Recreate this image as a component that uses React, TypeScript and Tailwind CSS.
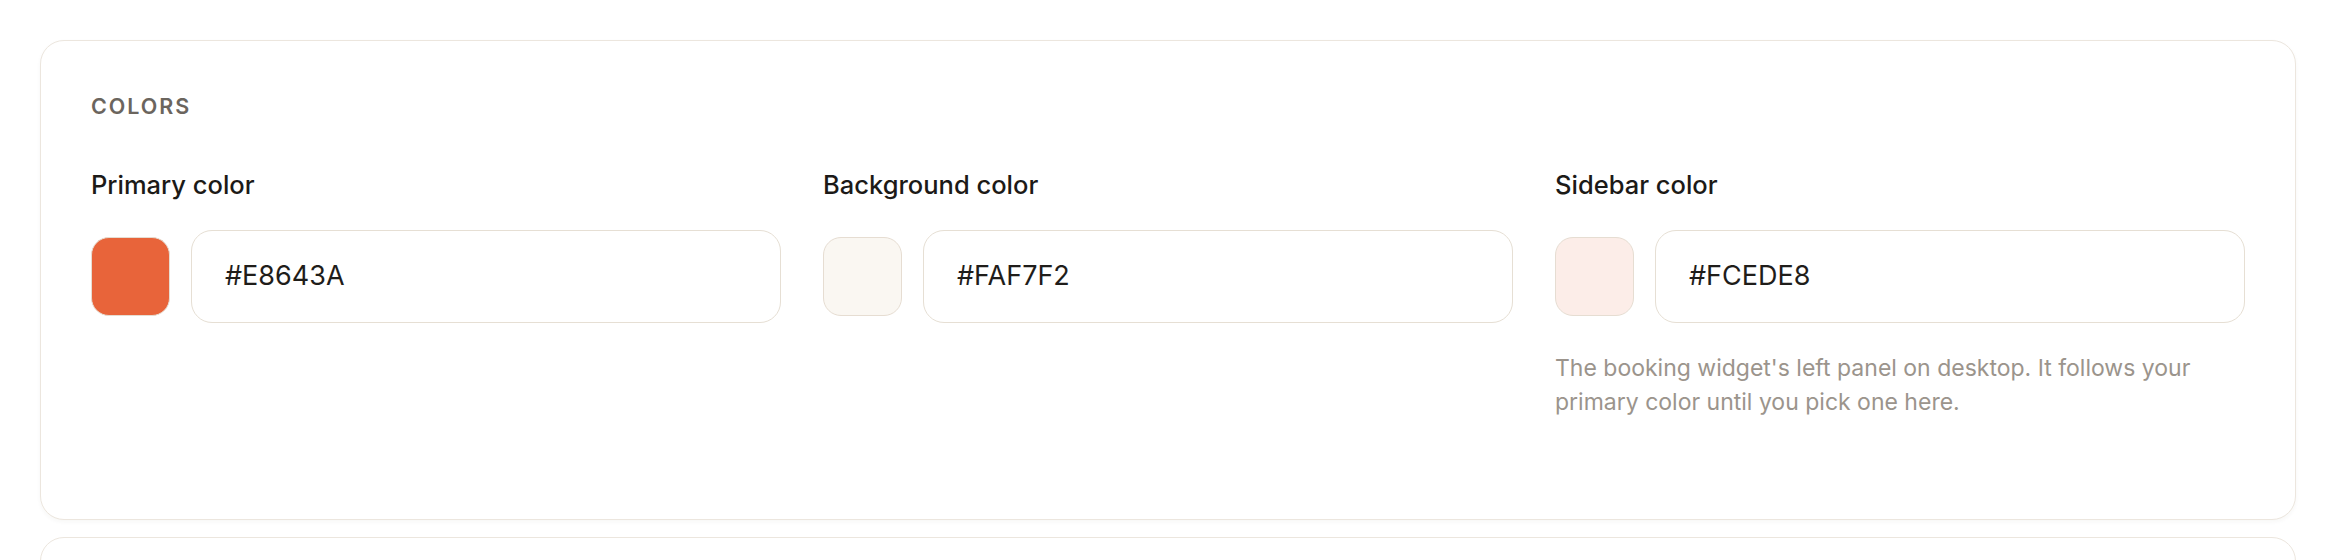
import React from "react";

interface ColorField {
  label: string;
  value: string;
  hint?: string;
}

const fields: ColorField[] = [
  { label: "Primary color", value: "#E8643A" },
  { label: "Background color", value: "#FAF7F2" },
  {
    label: "Sidebar color",
    value: "#FCEDE8",
    hint: "The booking widget's left panel on desktop. It follows your primary color until you pick one here.",
  },
];

function ColorInput({ field }: { field: ColorField }) {
  return (
    <div className="flex flex-col">
      <label className="text-[25.5px] leading-[36px] font-medium text-[#1c1a17]">{field.label}</label>
      <div className="mt-[27px] flex items-center gap-[21px]">
        <div
          className="w-[79px] h-[79px] shrink-0 rounded-[18px] border-[1.5px] border-[#e6ddd2]"
          style={{ backgroundColor: field.value }}
        />
        <div className="flex-1 h-[93px] flex items-center rounded-[21px] border-[1.5px] border-[#e6dfd4] bg-white px-[33px]">
          <span className="text-[27px] text-[#1f1d1a]">{field.value}</span>
        </div>
      </div>
      {field.hint && (
        <p className="mt-[28px] text-[23px] leading-[34px] text-[#9b948c]">{field.hint}</p>
      )}
    </div>
  );
}

export default function App() {
  return (
    <div
      className="min-h-screen bg-white px-[40px] pt-[40px] flex flex-col gap-[17px]"
      style={{ fontFamily: "Inter, 'Noto Sans', sans-serif" }}
    >
      <section className="rounded-[24px] border-[1.5px] border-[#ece6de] bg-white px-[50px] pt-[50px] pb-[100px] shadow-[0_2px_4px_rgba(60,40,20,0.04)]">
        <h2 className="text-[21.5px] leading-[31.5px] font-semibold tracking-[0.09em] text-[#6b655e]">COLORS</h2>
        <div className="mt-[44px] grid grid-cols-3 gap-[42px]">
          {fields.map((f) => (
            <ColorInput key={f.label} field={f} />
          ))}
        </div>
      </section>
      <section className="h-[200px] rounded-[24px] border-[1.5px] border-[#ece6de] bg-white" />
    </div>
  );
}
